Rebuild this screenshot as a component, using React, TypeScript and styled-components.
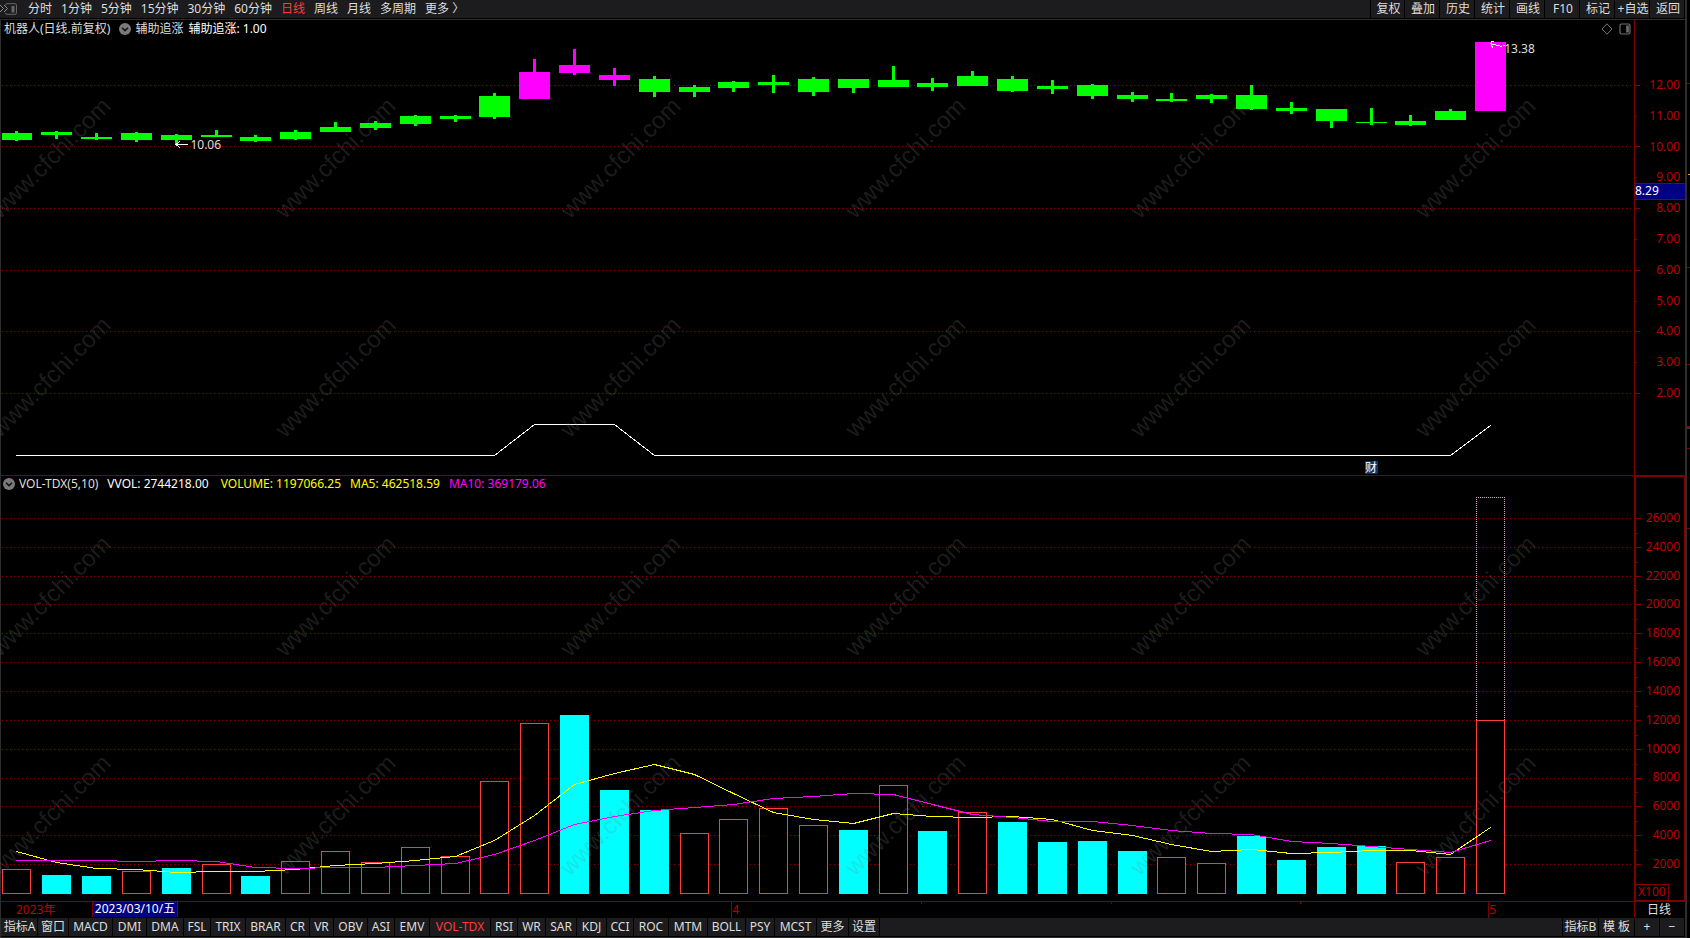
import React from "react";
import styled, { createGlobalStyle } from "styled-components";

const GlobalStyle = createGlobalStyle`
  * { box-sizing: border-box; }
  body {
    margin: 0;
    background: #000;
    color: #dedede;
    font: 12px/16px "Noto Sans", "Noto Sans CJK SC", sans-serif;
  }
`;

const AXIS_RED = "#800000";
const LABEL_RED = "#be0000";
const BAR_BG = "#1c1c1e";
const EDGE = "#2e2e2e";

/* ---------- layout ---------- */

const Shell = styled.div`
  display: flex;
  height: 100vh;
  min-height: 480px;
  overflow: hidden;
`;

const Window = styled.div`
  position: relative;
  display: flex;
  flex-direction: column;
  flex: 1;
  min-width: 0;
`;

const WindowEdge = styled.div`
  width: 2px;
  background: ${EDGE};
`;

const NextWindow = styled.svg`
  width: 3px;
  height: 100%;
`;

const Frame = styled.main`
  display: flex;
  flex-direction: column;
  flex: 1;
  min-height: 0;
  border-top: 1px solid ${EDGE};
  border-left: 1px solid ${EDGE};
  border-bottom: 1px solid ${EDGE};
`;

const ChartRow = styled.section<{ $grow: number; $divided?: boolean }>`
  display: flex;
  flex: ${(p) => p.$grow} 0 ${(p) => (p.$divided ? 19 : 16)}px;
  min-height: 0;
  border-bottom: ${(p) => (p.$divided ? `1px solid ${AXIS_RED}` : "none")};
`;

const ChartColumn = styled.div`
  display: flex;
  flex-direction: column;
  flex: 1;
  min-width: 0;
`;

const ChartHeader = styled.header<{ $height: number; $inset: number; $gap: number }>`
  display: flex;
  align-items: center;
  gap: ${(p) => p.$gap}px;
  height: ${(p) => p.$height}px;
  padding: 0 3px 0 ${(p) => p.$inset}px;
  white-space: pre;
`;

const HeaderTitle = styled.div`
  display: flex;
  align-items: center;
  gap: 4px;
`;

const HeaderText = styled.span<{ $color?: string }>`
  color: ${(p) => p.$color ?? "#dedede"};
`;

const StockName = styled(HeaderText)`
  margin-right: 4px;
`;

const HeaderTools = styled.div`
  display: flex;
  align-items: center;
  gap: 6px;
  margin-left: auto;
`;

const IconButton = styled.button`
  display: flex;
  padding: 0;
  border: 0;
  background: none;
`;

const Plot = styled.div`
  position: relative;
  flex: 1;
  min-height: 0;
`;

const PlotSvg = styled.svg`
  display: block;
  width: 100%;
  height: 100%;
`;

const PlotLabel = styled.span<{ $left: number; $top: number }>`
  position: absolute;
  left: ${(p) => p.$left}%;
  top: ${(p) => p.$top}%;
`;

const ReportBadge = styled.button`
  position: absolute;
  left: 83.5%;
  bottom: 1px;
  width: 13px;
  height: 13px;
  padding: 0;
  border: 0;
  background: #0a3566;
  color: #fff;
  font: inherit;
  line-height: 13px;
`;

const Axis = styled.div<{ $boxed?: boolean }>`
  position: relative;
  width: 51px;
  border: solid ${AXIS_RED};
  border-width: ${(p) => (p.$boxed ? "1px 1px 1px 2px" : "0 0 0 1px")};
`;

const AxisTicks = styled.svg`
  position: absolute;
  inset: 0 auto 0 0;
  width: 5px;
  height: 100%;
`;

const AxisLabels = styled.ol<{ $top: number; $bottom: number; $right: number }>`
  display: flex;
  flex-direction: column;
  justify-content: space-between;
  height: 100%;
  margin: 0;
  padding: ${(p) => `${p.$top}px ${p.$right}px ${p.$bottom}px 0`};
  list-style: none;
  text-align: right;
  color: ${LABEL_RED};
`;

const CursorPrice = styled.output`
  position: absolute;
  top: 163px;
  left: 0;
  right: 0;
  height: 17px;
  border: solid ${AXIS_RED};
  border-width: 1px 0;
  background: #000080;
  color: #fff;
  line-height: 14px;
`;

const UnitBox = styled.span`
  position: absolute;
  left: 0;
  bottom: 0;
  width: 33px;
  height: 16px;
  padding-left: 2px;
  border: solid ${AXIS_RED};
  border-width: 1px 1px 0 0;
  color: ${LABEL_RED};
  line-height: 14px;
`;

/* ---------- bars ---------- */

const TopBar = styled.nav`
  display: flex;
  height: 19px;
  border-bottom: 1px solid #000;
  background: ${BAR_BG};
`;

const PeriodList = styled.div`
  display: flex;
  align-items: center;
  gap: 9px;
  flex: 1;
`;

const PeriodButton = styled.button<{ $active?: boolean }>`
  padding: 0;
  border: 0;
  background: none;
  color: ${(p) => (p.$active ? "#ff3b3b" : "#dedede")};
  font: inherit;
  white-space: nowrap;
`;

const PanelToggle = styled(IconButton)`
  width: 19px;
`;

const BarButton = styled.button<{ $active?: boolean; $width: number }>`
  flex: none;
  width: ${(p) => p.$width}px;
  height: 18px;
  padding: 0;
  border: 0;
  border-right: 1px solid #000;
  background: ${BAR_BG};
  color: ${(p) => (p.$active ? "#ff3b3b" : "#dedede")};
  font: inherit;
  line-height: 16px;
  white-space: nowrap;
`;

const ToolButton = styled(BarButton)`
  padding-left: 2px;
`;

const ToolGroup = styled.div`
  display: flex;
  border-left: 1px solid #000;
`;

const BottomBar = styled.nav`
  display: flex;
  height: 19px;
  padding-left: 1px;
  border-bottom: 1px solid #000;
  background: ${BAR_BG};
`;

const BottomSpacer = styled.div`
  flex: 1;
  border-right: 1px solid #000;
`;

const DateRow = styled.div`
  position: relative;
  display: flex;
  height: 17px;
  border-top: 1px solid ${AXIS_RED};
  color: ${LABEL_RED};
  line-height: 15px;
`;

const YearMark = styled.span`
  width: 91px;
  padding-left: 15px;
`;

const CursorDate = styled.time`
  width: 86px;
  height: 15px;
  border: solid ${AXIS_RED};
  border-width: 0 1px;
  background: #000080;
  color: #fff;
  text-align: center;
  white-space: nowrap;
  line-height: 14px;
`;

const Stretch = styled.span<{ $grow: number; $mark?: boolean }>`
  flex: ${(p) => p.$grow} 0 0;
  border-left: ${(p) => (p.$mark ? `1px solid ${AXIS_RED}` : "none")};
`;

const PeriodCell = styled.span`
  width: 51px;
  padding-right: 2px;
  border-left: 1px solid ${AXIS_RED};
  color: #dedede;
  text-align: center;
`;

const DateTicks = styled.svg`
  position: absolute;
  top: 0;
  left: 0;
  width: calc(100% - 51px);
  height: 2px;
`;

/* ---------- watermark ---------- */

const WatermarkLayer = styled.div`
  position: absolute;
  inset: 0;
  overflow: hidden;
  pointer-events: none;
`;

const WatermarkGrid = styled.div`
  display: grid;
  grid-template-columns: repeat(6, 285px);
  grid-auto-rows: 219px;
  margin: 48px 0 0 -92px;
`;

const Watermark = styled.span`
  place-self: center;
  transform: rotate(-45deg);
  color: rgba(128, 128, 128, 0.22);
  font: 24px/28px "Liberation Sans", sans-serif;
`;

/* ---------- data ---------- */

const periods = ["分时", "1分钟", "5分钟", "15分钟", "30分钟", "60分钟", "日线", "周线", "月线", "多周期", "更多 〉"];
const tools = ["复权", "叠加", "历史", "统计", "画线", "F10", "标记", "+自选", "返回"];
const indicators: [string, number][] = [
  ["指标A", 36], ["窗口", 31], ["MACD", 44], ["DMI", 34], ["DMA", 37], ["FSL", 27], ["TRIX", 35],
  ["BRAR", 40], ["CR", 24], ["VR", 24], ["OBV", 34], ["ASI", 27], ["EMV", 35], ["VOL-TDX", 61],
  ["RSI", 27], ["WR", 28], ["SAR", 31], ["KDJ", 30], ["CCI", 27], ["ROC", 35], ["MTM", 39],
  ["BOLL", 38], ["PSY", 29], ["MCST", 42], ["更多", 32], ["设置", 31],
];

// body top, body bottom, high, low
const candles: number[][] = [
  [133, 140, 131, 141], [132, 135, 131, 139], [137, 139, 133, 140], [133, 140, 132, 142],
  [135, 140, 134, 145], [135, 137, 130, 137], [137, 141, 135, 142], [132, 139, 130, 140],
  [127, 132, 122, 132], [123, 128, 121, 130], [116, 124, 115, 126], [116, 119, 115, 122],
  [96, 117, 93, 119], [72, 99, 59, 99], [65, 73, 49, 75], [75, 80, 68, 86],
  [79, 92, 76, 97], [87, 92, 85, 97], [82, 88, 81, 92], [82, 85, 75, 93],
  [79, 92, 77, 96], [79, 88, 79, 93], [80, 87, 66, 87], [83, 87, 78, 91],
  [76, 86, 71, 86], [79, 91, 76, 92], [86, 89, 80, 94], [85, 96, 84, 99],
  [95, 99, 92, 102], [99, 101, 93, 102], [95, 99, 94, 103], [95, 109, 85, 110],
  [108, 111, 102, 114], [109, 121, 109, 128], [122, 123, 108, 125], [121, 125, 115, 126],
  [111, 120, 109, 120], [42, 111, 42, 111],
];
const signalDays = [13, 14, 15, 37];

const volumeTops = [
  869, 875, 876, 871, 868, 864, 876, 861, 851, 862, 847, 856, 781, 723, 715, 790, 810, 833, 819,
  808, 825, 830, 785, 831, 812, 822, 842, 841, 851, 857, 863, 836, 860, 847, 846, 862, 857, 720,
];
const downDays = [1, 2, 4, 6, 14, 15, 16, 21, 23, 25, 26, 27, 28, 31, 32, 33, 34];
const ma5 = [
  851, 862, 868, 869, 872, 871, 871, 869, 865, 863, 860, 856, 840, 815, 784, 773, 764, 774, 793,
  812, 819, 823, 813, 816, 817, 816, 819, 830, 835, 844, 851, 849, 853, 852, 850, 850, 854, 827,
];
const ma10 = [
  860, 860, 860, 861, 860, 861, 867, 868, 867, 867, 865, 863, 854, 840, 824, 816, 810, 807, 804,
  798, 796, 793, 794, 804, 814, 817, 821, 821, 825, 830, 833, 834, 841, 843, 846, 849, 852, 840,
];
const priceLines = [85, 146, 208, 270, 331, 393];
const priceMinor = [116, 177, 239, 301, 362];
const volumeLines = [518, 547, 576, 604, 633, 662, 691, 720, 749, 778, 806, 835, 864];
const volumeMinor = [533, 562, 590, 619, 648, 677, 706, 735, 764, 792, 821, 850];

const centre = (i: number) => Math.ceil(15 + 39.825 * i) + 1;
const polyline = (ys: number[]) => ys.map((y, i) => `${centre(i) + 0.5},${y + 0.5}`).join(" ");

/* ---------- drawings ---------- */

const PanelIcon = () => (
  <svg width="12" height="12" viewBox="0 0 12 12" fill="none" stroke="#707070">
    <rect x="1" y="1" width="10" height="10" rx="1.5" strokeWidth="1.2" />
    <path d="M8.5 2.5v7" strokeWidth="2.6" />
  </svg>
);

const DiamondIcon = () => (
  <svg width="12" height="12" viewBox="0 0 12 12" fill="none" stroke="#777">
    <path d="M6 .8 11 6 6 11.2 1 6z" />
  </svg>
);

const CollapseIcon = () => (
  <svg width="12" height="12" viewBox="0 0 12 12">
    <circle cx="6" cy="6" r="6" fill="#7a7a7a" />
    <path d="M3 4.8 6 7.6 9 4.8" fill="none" stroke="#111" strokeWidth="1.5" />
  </svg>
);

const ToggleIcon = () => (
  <svg width="19" height="14" viewBox="0 0 19 14" fill="none">
    <path d="M0 3l3.5 3.5L0 10M4 3l3.5 3.5L4 10" stroke="#8c8c8c" />
    <path d="M5.5 3.2Q5.5 1.7 7 1.7h8q1.5 0 1.5 1.5v7.6q0 1.5-1.5 1.5H7q-1.5 0-1.5-1.5" stroke="#666" />
    <path d="M13 4v6.5" stroke="#666" strokeWidth="3" />
  </svg>
);

const GridLines = ({ ys }: { ys: number[] }) => (
  <g stroke="#8c0000" strokeDasharray="1 3">
    {ys.map((y) => (
      <line key={y} x1="2" x2="1632" y1={y + 0.5} y2={y + 0.5} />
    ))}
  </g>
);

const Ticks = ({ major, minor, box }: { major: number[]; minor: number[]; box: string }) => (
  <AxisTicks viewBox={box} preserveAspectRatio="none" shapeRendering="crispEdges" aria-hidden="true">
    {major.map((y) => <rect key={y} x="0" y={y} width="5" height="1" fill={AXIS_RED} />)}
    {minor.map((y) => <rect key={y} x="0" y={y} width="2" height="1" fill={AXIS_RED} />)}
  </AxisTicks>
);

const PriceChart = () => (
  <PlotSvg viewBox="1 38 1633 437" preserveAspectRatio="none" shapeRendering="crispEdges" role="img" aria-label="日线">
    <GridLines ys={priceLines} />
    {candles.map(([top, bottom, high, low], i) => {
      const c = centre(i);
      return (
        <g key={i} fill={signalDays.includes(i) ? "#f0f" : "#0f0"}>
          <rect x={Math.max(c - 15, 2)} y={top} width={i ? 31 : 30} height={bottom - top} />
          <rect x={c - 1} y={high} width="3" height={low - high} />
        </g>
      );
    })}
    <polyline
      points={polyline(candles.map((_, i) => (i === 37 ? 425 : signalDays.includes(i) ? 424 : 455)))}
      fill="none"
      stroke="#fff"
      strokeLinecap="square"
    />
    <g fill="none" stroke="#fff">
      <path d="M176 144.5h12M180 141l-4 3.5 4 3.5" />
      <path d="M1490 43.5l12 3M1494 41.5h-3v4l2 2M1503 45.5h2" />
    </g>
  </PlotSvg>
);

const VolumeChart = () => (
  <PlotSvg viewBox="1 492 1633 409" preserveAspectRatio="none" shapeRendering="crispEdges" role="img" aria-label="VOL-TDX">
    <GridLines ys={volumeLines} />
    {volumeTops.map((top, i) => {
      const x = centre(i) - 14;
      return downDays.includes(i) ? (
        <rect key={i} x={x} y={top} width="29" height={894 - top} fill="#0ff" />
      ) : (
        <rect key={i} x={x + 0.5} y={top + 0.5} width="28" height={893 - top} fill="#000" stroke="#ff3b3b" />
      );
    })}
    <path d="M1476.5 720V497.5H1504.5V720" fill="none" stroke="#c8c800" strokeDasharray="1 1" />
    <g fill="none" strokeLinecap="square">
      <polyline points={polyline(ma5)} stroke="#ff0" />
      <polyline points={polyline(ma10)} stroke="#f0f" />
    </g>
  </PlotSvg>
);

export default function App() {
  return (
    <Shell>
      <GlobalStyle />
      <Window>
        <TopBar>
          <PeriodList>
            <PanelToggle aria-label="面板"><ToggleIcon /></PanelToggle>
            {periods.map((p) => <PeriodButton key={p} $active={p === "日线"}>{p}</PeriodButton>)}
          </PeriodList>
          <ToolGroup>
            {tools.map((t, i) => <ToolButton key={t} $width={i ? 35 : 34}>{t}</ToolButton>)}
          </ToolGroup>
        </TopBar>

        <Frame>
          <ChartRow $grow={437} $divided>
            <ChartColumn>
              <ChartHeader $height={18} $inset={3} $gap={5}>
                <StockName>机器人(日线.前复权)</StockName>
                <HeaderTitle>
                  <IconButton aria-label="收起"><CollapseIcon /></IconButton>
                  <HeaderText>辅助追涨</HeaderText>
                </HeaderTitle>
                <HeaderText $color="#fff">辅助追涨: 1.00</HeaderText>
                <HeaderTools>
                  <IconButton aria-label="标注"><DiamondIcon /></IconButton>
                  <IconButton aria-label="侧栏"><PanelIcon /></IconButton>
                </HeaderTools>
              </ChartHeader>
              <Plot>
                <PriceChart />
                <PlotLabel $left={11.6} $top={22.7}>10.06</PlotLabel>
                <PlotLabel $left={92.05} $top={0.7}>13.38</PlotLabel>
                <ReportBadge>财</ReportBadge>
              </Plot>
            </ChartColumn>
            <Axis>
              <Ticks major={priceLines} minor={priceMinor} box="0 20 5 455" />
              <AxisLabels $top={57} $bottom={74} $right={5}>
                {[12, 11, 10, 9, 8, 7, 6, 5, 4, 3, 2].map((v) => <li key={v}>{v.toFixed(2)}</li>)}
              </AxisLabels>
              <CursorPrice>8.29</CursorPrice>
            </Axis>
          </ChartRow>

          <ChartRow $grow={409}>
            <ChartColumn>
              <ChartHeader $height={16} $inset={2} $gap={9}>
                <HeaderTitle>
                  <IconButton aria-label="收起"><CollapseIcon /></IconButton>
                  <HeaderText>VOL-TDX(5,10)</HeaderText>
                </HeaderTitle>
                <HeaderText $color="#fff">VVOL: 2744218.00 </HeaderText>
                <HeaderText $color="#ff0">VOLUME: 1197066.25</HeaderText>
                <HeaderText $color="#ff0">MA5: 462518.59</HeaderText>
                <HeaderText $color="#f0f">MA10: 369179.06</HeaderText>
              </ChartHeader>
              <Plot><VolumeChart /></Plot>
            </ChartColumn>
            <Axis $boxed>
              <Ticks major={volumeLines} minor={volumeMinor} box="0 477 5 423" />
              <AxisLabels $top={33} $bottom={28} $right={4}>
                {volumeLines.map((y, i) => <li key={y}>{26000 - i * 2000}</li>)}
              </AxisLabels>
              <UnitBox>X100</UnitBox>
            </Axis>
          </ChartRow>

          <DateRow>
            <DateTicks viewBox="1 0 1633 2" preserveAspectRatio="none" aria-hidden="true">
              {[921, 1111, 1300].map((x) => <rect key={x} x={x} y="0" width="1" height="2" fill={AXIS_RED} />)}
            </DateTicks>
            <YearMark>2023年</YearMark>
            <CursorDate dateTime="2023-03-10">2023/03/10/五</CursorDate>
            <Stretch $grow={554} />
            <Stretch $grow={757} $mark>4</Stretch>
            <Stretch $grow={145} $mark>5</Stretch>
            <PeriodCell>日线</PeriodCell>
          </DateRow>

          <BottomBar>
            {indicators.map(([name, width]) => (
              <BarButton key={name} $width={width} $active={name === "VOL-TDX"}>{name}</BarButton>
            ))}
            <BottomSpacer />
            <BarButton $width={36}>指标B</BarButton>
            <BarButton $width={36}>模 板</BarButton>
            <BarButton $width={25}>+</BarButton>
            <BarButton $width={25}>−</BarButton>
          </BottomBar>
        </Frame>

        <WatermarkLayer aria-hidden="true">
          <WatermarkGrid>
            {Array.from({ length: 24 }, (_, i) => <Watermark key={i}>www.cfchi.com</Watermark>)}
          </WatermarkGrid>
        </WatermarkLayer>
      </Window>
      <WindowEdge />
      <NextWindow viewBox="0 0 3 938" preserveAspectRatio="none" aria-hidden="true">
        {[83, 267, 364, 426, 448, 528].map((y) => <rect key={y} y={y} width="3" height="1" fill={AXIS_RED} />)}
        <rect y="427" width="3" height="2" fill="#333" />
        <rect x="1" y="174" width="2" height="1" fill="#e0a030" />
      </NextWindow>
    </Shell>
  );
}
